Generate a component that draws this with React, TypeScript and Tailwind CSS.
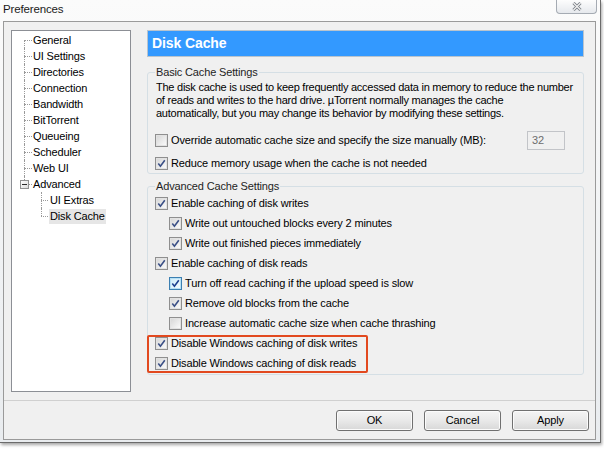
import React from "react";

const treeTop = ["General", "UI Settings", "Directories", "Connection", "Bandwidth", "BitTorrent", "Queueing", "Scheduler", "Web UI"];

function Check({ checked, hover }: { checked: boolean; hover?: boolean }) {
  return (
    <span
      className={`flex h-[13px] w-[13px] shrink-0 items-center justify-center border bg-white ${
        hover ? "border-[#3c7fb1]" : "border-[#8f8f8f]"
      }`}
    >
      <span
        className={`flex h-[11px] w-[11px] items-center justify-center border ${
          hover
            ? "border-[#b6e0f5] bg-linear-to-br from-[#cfecfa] to-[#f2fafe]"
            : "border-[#e2e2e2] bg-linear-to-br from-[#d8d8d8] to-[#fafafa]"
        }`}
      >
        {checked && (
          <svg width="9" height="9" viewBox="0 0 9 9">
            <path d="M1.3 4.6 L3.4 7.2 L7.8 1.2" fill="none" stroke={hover ? "#1c3f8f" : "#3a4f86"} strokeWidth="1.6" />
          </svg>
        )}
      </span>
    </span>
  );
}

function Row({ label, checked, sub, hover }: { label: string; checked: boolean; sub?: boolean; hover?: boolean }) {
  return (
    <div className={`flex h-[20px] items-center gap-[3px] ${sub ? "pl-[14px]" : ""}`}>
      <Check checked={checked} hover={hover} />
      <span className="whitespace-nowrap">{label}</span>
    </div>
  );
}

function Button({ label }: { label: string }) {
  return (
    <div className="flex h-[21px] w-[77px] items-center justify-center rounded-[3px] border border-[#707070] bg-linear-to-b from-[#f4f4f4] via-[#e9e9e9] to-[#d8d8d8] shadow-[inset_0_0_0_1px_#fbfbfb]">
      {label}
    </div>
  );
}

export default function App() {
  return (
    <div className="h-[449px] w-[604px] overflow-hidden bg-white font-['Liberation_Sans',Arial,sans-serif] text-[11px] leading-[13px] tracking-[-0.15px] text-black">
      <div className="w-[601px] border-r border-b border-[#6b6b6b] bg-linear-to-b from-[#fbfbfb] to-[#e9ecef] shadow-[1px_2px_3px_rgba(0,0,0,0.35)]">
        {/* title bar */}
        <div className="flex h-[21px] items-start justify-between">
          <span className="pl-[3px] pt-[3px] text-[11.5px] text-[#1a1a1a]">Preferences</span>
          <div className="mr-[3px] flex h-[14px] w-[41px] items-center justify-center rounded-b-[4px] border border-t-0 border-[#a5abb3] bg-linear-to-b from-[#fdfdfd] to-[#e6e9ed]">
            <svg width="10" height="9" viewBox="0 0 10 9">
              <path d="M1.5 1 L8.5 8 M8.5 1 L1.5 8" stroke="#7a7f86" strokeWidth="3" />
              <path d="M1.5 1 L8.5 8 M8.5 1 L1.5 8" stroke="#f4f4f4" strokeWidth="1.2" />
            </svg>
          </div>
        </div>

        {/* client area */}
        <div className="ml-[3px] mr-[4px] flex h-[419px] flex-col border border-[#9a9a9a] bg-[#f0f0f0]">
          <div className="flex h-[378px] gap-[16px] pl-[7px] pt-[8px]">
            {/* tree */}
            <div className="h-[362px] w-[120px] border border-[#8c8f95] bg-white pt-[1px]">
              {treeTop.map((t, i) => (
                <div key={t} className="flex h-[16px] items-center">
                  <span className="relative ml-[12px] h-full w-[8px]">
                    <span
                      className={`absolute left-0 border-l border-dotted border-[#9a9a9a] ${
                        i === 0 ? "top-1/2 bottom-0" : "inset-y-0"
                      }`}
                    />
                    <span className="absolute left-0 right-0 top-1/2 border-t border-dotted border-[#9a9a9a]" />
                  </span>
                  <span className="ml-[1px]">{t}</span>
                </div>
              ))}
              <div className="flex h-[16px] items-center">
                <span className="relative ml-[8px] h-full w-[12px]">
                  <span className="absolute left-[4px] top-0 h-[4px] border-l border-dotted border-[#9a9a9a]" />
                  <span className="absolute left-0 top-[4px] flex h-[9px] w-[9px] items-center justify-center border border-[#919191] bg-linear-to-br from-white to-[#dcdcdc]">
                    <span className="h-px w-[5px] bg-[#2a2a2a]" />
                  </span>
                  <span className="absolute left-[9px] right-0 top-1/2 border-t border-dotted border-[#9a9a9a]" />
                </span>
                <span className="ml-[1px]">Advanced</span>
              </div>
              {["UI Extras", "Disk Cache"].map((t, i) => (
                <div key={t} className="flex h-[16px] items-center">
                  <span className="relative ml-[29px] h-full w-[7px]">
                    <span
                      className={`absolute left-0 border-l border-dotted border-[#9a9a9a] ${
                        i === 0 ? "inset-y-0" : "top-0 h-1/2"
                      }`}
                    />
                    <span className="absolute left-0 right-0 top-1/2 border-t border-dotted border-[#9a9a9a]" />
                  </span>
                  <span className={`ml-[1px] px-[1px] leading-[15px] ${i === 1 ? "bg-[#e6e6e6]" : ""}`}>{t}</span>
                </div>
              ))}
            </div>

            {/* panel */}
            <div className="w-[437px]">
              <div className="flex h-[27px] items-center border border-[#b9c4ce] bg-[#3399ff] pl-[4px] pb-[1px] text-[14px] font-bold tracking-[-0.1px] text-white">
                Disk Cache
              </div>

              <fieldset className="mt-[9px] rounded-[3px] border border-[#d5dfe5] pl-[7px] pr-[8px]">
                <legend className="px-[1px] text-[#1e1e1e]">Basic Cache Settings</legend>
                <p className="mt-[2px] whitespace-nowrap pl-[1px] tracking-[-0.25px]">
                  The disk cache is used to keep frequently accessed data in memory to reduce the number
                  <br />
                  of reads and writes to the hard drive. µTorrent normally manages the cache
                  <br />
                  automatically, but you may change its behavior by modifying these settings.
                </p>
                <div className="mt-[10px] flex h-[20px] items-center">
                  <Row label="Override automatic cache size and specify the size manually (MB):" checked={false} />
                  <div className="ml-auto mr-[10px] flex h-[19px] w-[38px] items-center border border-[#c2c4c8] bg-[#f0f0f0] pl-[4px] text-[#6d6d6d]">
                    32
                  </div>
                </div>
                <div className="mt-[3px]">
                  <Row label="Reduce memory usage when the cache is not needed" checked />
                </div>
              </fieldset>

              <fieldset className="mt-[6px] rounded-[3px] border border-[#d5dfe5] pb-[1px] pl-[7px] pr-[8px]">
                <legend className="px-[1px] text-[#1e1e1e]">Advanced Cache Settings</legend>
                <Row label="Enable caching of disk writes" checked />
                <Row label="Write out untouched blocks every 2 minutes" checked sub />
                <Row label="Write out finished pieces immediately" checked sub />
                <Row label="Enable caching of disk reads" checked />
                <Row label="Turn off read caching if the upload speed is slow" checked sub hover />
                <Row label="Remove old blocks from the cache" checked sub />
                <Row label="Increase automatic cache size when cache thrashing" checked={false} sub />
                <div className="relative">
                  <Row label="Disable Windows caching of disk writes" checked />
                  <Row label="Disable Windows caching of disk reads" checked />
                  <div className="pointer-events-none absolute left-[-8px] top-[2px] h-[38px] w-[221px] rounded-[2px] border-2 border-[#e2491f]" />
                </div>
              </fieldset>
            </div>
          </div>

          <div className="border-t border-[#d0d0d0]" />
          <div className="flex justify-end gap-[11px] pr-[6px] pt-[9px]">
            <Button label="OK" />
            <Button label="Cancel" />
            <Button label="Apply" />
          </div>
        </div>
        <div className="h-[2px]" />
      </div>
    </div>
  );
}
